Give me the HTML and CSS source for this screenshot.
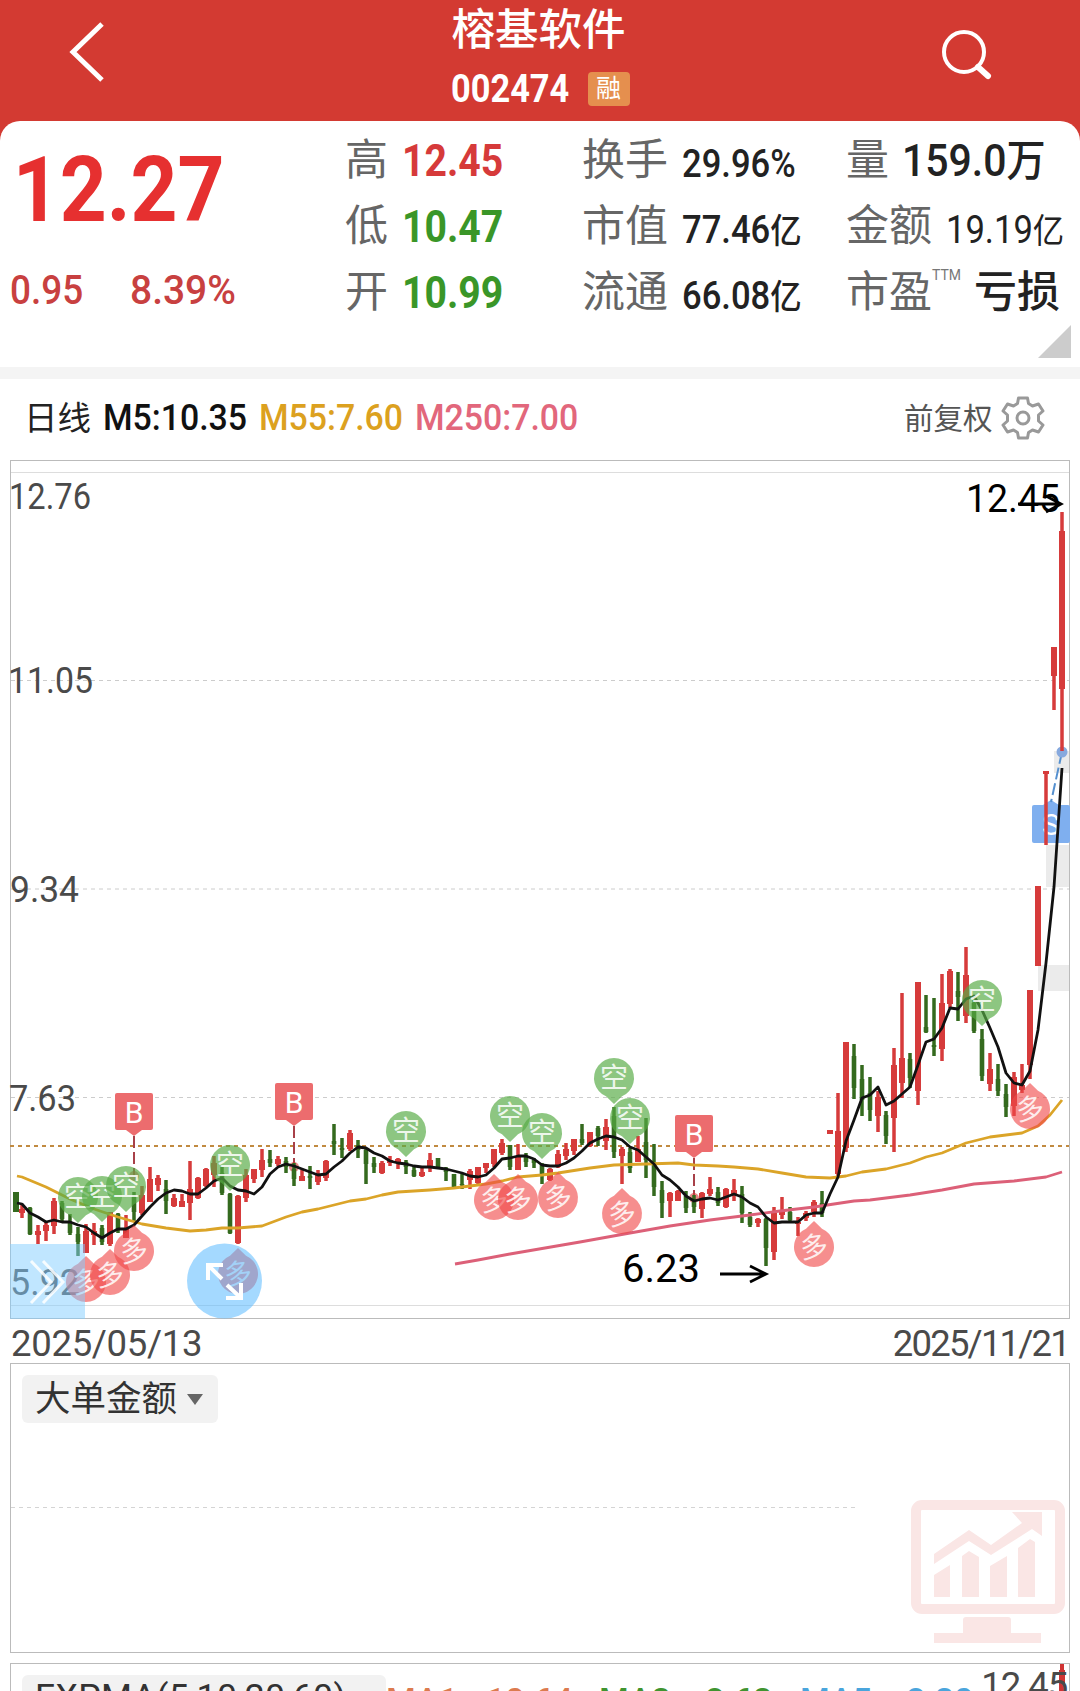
FILE: index.html
```html
<!DOCTYPE html>
<html lang="zh-CN">
<head>
    <meta charset="UTF-8">
    <meta name="viewport" content="width=device-width, initial-scale=1.0">
    <title>榕基软件 002474</title>
    <link rel="stylesheet" href="styles.css">
</head>
<body>
    <header class="header">
        <svg class="back" width="40" height="64" viewBox="0 0 40 64">
            <path d="M35 4 L6 32 L35 60" />
        </svg>
        <div class="title">
            <h1>榕基软件</h1>
            <div class="code"><span class="code-num">002474</span><span class="badge">融</span></div>
        </div>
        <svg class="search" width="54" height="54" viewBox="0 0 54 54">
            <circle cx="24" cy="24" r="20" />
            <path d="M38 39 L48 48" />
        </svg>
    </header>

    <section class="quote">
        <div class="price-box">
            <div class="price">12.27</div>
            <div class="change"><span class="diff">0.95</span><span class="pct">8.39%</span></div>
        </div>
        <div class="stats">
            <div class="cell"><span class="label">高</span><span class="value red">12.45</span></div>
            <div class="cell"><span class="label">换手</span><span class="value small">29.96%</span></div>
            <div class="cell"><span class="label">量</span><span class="value vol">159.0<i>万</i></span></div>
            <div class="cell"><span class="label">低</span><span class="value green">10.47</span></div>
            <div class="cell"><span class="label">市值</span><span class="value small">77.46<i>亿</i></span></div>
            <div class="cell"><span class="label">金额</span><span class="value small light">19.19<i>亿</i></span></div>
            <div class="cell"><span class="label">开</span><span class="value green">10.99</span></div>
            <div class="cell"><span class="label">流通</span><span class="value small">66.08<i>亿</i></span></div>
            <div class="cell"><span class="label">市盈</span><span class="ttm">TTM</span><span class="loss">亏损</span></div>
        </div>
        <div class="expand"></div>
    </section>

    <section class="legend">
        <span class="period">日线</span>
        <span class="ma ma5">M5:10.35</span>
        <span class="ma ma55">M55:7.60</span>
        <span class="ma ma250">M250:7.00</span>
        <span class="adjust">前复权</span>
        <svg class="gear" width="44" height="44" viewBox="-22 -22 44 44">
            <path d="M-4.5 -20 H4.5 L5.500 -14.500 L9.500 -12 L15.500 -14 L20 -7 L15.500 -3 V3 L20 7 L15.500 14 L9.500 12 L5.500 14.500 L4.500 20 H-4.500 L-5.500 14.500 L-9.500 12 L-15.500 14 L-20 7 L-15.500 3 V-3 L-20 -7 L-15.500 -14 L-9.500 -12 L-5.500 -14.500 Z" />
            <circle r="6" />
        </svg>
    </section>

    <svg class="kline" id="kline" width="1080" height="862" viewBox="0 459 1080 862">
        <rect class="frame" x="10.500" y="460.500" width="1059" height="858" />
        <path class="grid-solid" d="M11 472.500 H1069 M11 1305.500 H1069" />
        <path class="grid-dash" d="M11 680.500 H1069 M11 889 H1069 M11 1097.500 H1069" />
        <g class="gap">
            <rect x="1054" y="751" width="15" height="22" />
            <rect x="1046" y="845" width="23" height="42" />
            <rect x="1038" y="965" width="31" height="26" />
        </g>
        <g class="axis">
            <text x="9" y="509" textLength="82" lengthAdjust="spacingAndGlyphs">12.76</text>
            <text x="8" y="693" textLength="85" lengthAdjust="spacingAndGlyphs">11.05</text>
            <text x="10" y="902" textLength="69" lengthAdjust="spacingAndGlyphs">9.34</text>
            <text x="9" y="1111" textLength="67" lengthAdjust="spacingAndGlyphs">7.63</text>
            <text x="10" y="1295" textLength="70" lengthAdjust="spacingAndGlyphs">5.92</text>
        </g>
        <path class="cost" d="M10 1146 H1069" />
        <g id="marks"></g>
        <g id="candles"></g>
        <polyline class="line line250" points="455,1264 478,1260 510,1254 545,1248 580,1242 630,1233 670,1226 710,1220 750,1215 780,1211 814,1207 854,1201 870,1200 910,1195 942,1190 974,1184 1014,1181 1046,1177 1062,1172" />
        <polyline class="line line55" points="17,1176 22,1177 46,1187 70,1199 94,1209 118,1217 142,1224 166,1228 190,1231 206,1230 222,1228 238,1228 262,1226 270,1223 286,1217 302,1212 318,1209 334,1205 350,1201 366,1199 382,1195 398,1192 414,1191 430,1190 454,1188 470,1186 486,1184 502,1181 518,1177 542,1175 558,1173 590,1168 614,1165 646,1164 678,1163 694,1165 718,1166 734,1167 758,1169 782,1173 806,1177 830,1178 846,1176 862,1172 886,1169 910,1163 926,1157 942,1153 966,1143 990,1137 1022,1133 1038,1126 1050,1115 1062,1100" />
        <polyline class="line line5" id="line5" />
        <g id="signals"></g>
        <g class="extreme">
            <text x="966" y="512" textLength="94" lengthAdjust="spacingAndGlyphs">12.45</text>
            <path d="M1018 504 H1061 M1046 496 L1061 504 L1046 512" />
            <text x="622" y="1282" textLength="78" lengthAdjust="spacingAndGlyphs">6.23</text>
            <path d="M720 1274 H766 M750 1266 L766 1274 L750 1282" />
        </g>
        <g class="tools">
            <rect x="10" y="1244" width="75" height="75" />
            <path class="thin" d="M31 1261 L51 1282 L31 1303 M43 1261 L63 1282 L43 1303" />
            <circle cx="224.500" cy="1281" r="37.500" />
            <path d="M222 1279 L208 1265 M208 1280 V1265 H223 M227 1285 L241 1298 M241 1283 V1298 H226" />
        </g>
    </svg>

    <div class="dates"><span>2025/05/13</span><span class="to">2025/11/21</span></div>

    <section class="panel">
        <div class="tag">大单金额<i class="caret"></i></div>
        <div class="mid"></div>
        <svg class="monitor" width="156" height="148" viewBox="0 0 156 148">
            <rect class="screen" x="6" y="6" width="144" height="104" rx="6" />
            <path d="M53 121 Q53 118 56 118 H98 Q101 118 101 121 V134 H131 V144 H24 V134 H53 Z" />
            <path d="M24 55 L59 31 L81 46 L112 24 L102 13 H132 V37 L122 30 L81 56 L59 42 L24 65 Z" />
            <path d="M24 76 L40 66 V98 H24 Z M52 57 L59 52 L69 58 V98 H52 Z M80 67 L97 57 V98 H80 Z M108 49 L120 40 L125 43 V98 H108 Z" />
        </svg>
    </section>

    <section class="panel expma">
        <div class="tag"><span class="tag-text">EXPMA(5,10,20,60)</span></div>
        <span class="avg a1"><b>MA1:</b>10.64</span>
        <span class="avg a2"><b>MA2:</b>8.62</span>
        <span class="avg a3"><b>MA5:</b>8.20</span>
        <span class="bar"></span>
        <span class="top">12.45</span>
    </section>

    <script src="chart.js"></script>
</body>
</html>
```
FILE: styles.css
```css
* {
    box-sizing: border-box;
}
html,
body {
    height: 1691px;
    overflow: hidden;
}
body {
    margin: 0;
    width: 1080px;
    background: #fff;
    font-family: Roboto, "Noto Sans CJK SC", sans-serif;
    color: #222;
}
i,
b {
    font-style: normal;
    font-weight: inherit;
}

/* header */
.header {
    display: flex;
    justify-content: space-between;
    height: 141px;
    padding: 0 80px 0 67px;
    background: #d33a32;
    color: #fff;
}
.back {
    margin-top: 20px;
    fill: none;
    stroke: #fff;
    stroke-width: 5;
}
.search {
    margin-top: 28px;
    margin-right: 6px;
    fill: none;
    stroke: #fff;
    stroke-width: 4;
    stroke-linecap: round;
}
.search path {
    stroke-width: 6;
}
.title {
    width: 190px;
    margin-left: 30px;
}
.title h1 {
    margin: 0;
    font-size: 43.5px;
    font-weight: 500;
    line-height: 54px;
    white-space: nowrap;
    text-align: center;
    font-family: "Noto Sans CJK SC", sans-serif;
}
.code {
    display: flex;
    align-items: center;
    height: 69px;
    padding-left: 7px;
}
.code-num {
    width: 137px;
    font-size: 39.5px;
    font-weight: 700;
    line-height: 69px;
    transform: scaleX(.87);
    transform-origin: left;
}
.badge {
    width: 42px;
    height: 34px;
    flex: none;
    border-radius: 4px;
    background: #e58f4e;
    font-size: 25px;
    line-height: 33px;
    text-align: center;
}

/* quote */
.quote {
    position: relative;
    display: flex;
    height: 246px;
    margin-top: -20px;
    padding: 2px 0 0 10px;
    border-radius: 20px 20px 0 0;
    background: #fff;
}
.price-box {
    width: 335px;
}
.price {
    height: 134px;
    padding-left: 3px;
    font-size: 91px;
    font-weight: 700;
    line-height: 134px;
    color: #e63030;
    transform: scaleX(.9);
    transform-origin: left;
}
.change {
    display: flex;
    height: 66px;
    font-size: 41px;
    font-weight: 500;
    line-height: 67px;
    color: #c84040;
}
.change span {
    width: 120px;
    transform: scaleX(.9);
    transform-origin: left;
}
.change .pct {
    transform: scaleX(.95);
}
.stats {
    display: grid;
    grid-template-columns: 237px 264px 232px;
    grid-auto-rows: 66px;
    height: 198px;
}
.cell {
    display: flex;
    align-items: baseline;
    line-height: 66px;
    white-space: nowrap;
}
.label {
    flex: none;
    font-family: "Noto Sans CJK SC", sans-serif;
    font-size: 43px;
    color: #666;
}
.value {
    margin-left: 14px;
    font-size: 45px;
    font-weight: 700;
    transform: translateY(1px) scaleX(.87);
    transform-origin: left;
}
.value.small {
    font-size: 38px;
    font-weight: 500;
    transform: translateY(2px) scaleX(.91);
}
.value.small i {
    font-size: 34.5px;
}
.value.vol {
    margin-left: 13px;
    font-weight: 500;
    transform: translateY(1px) scaleX(.91);
}
.value.vol i {
    font-size: 43px;
}
.value.light {
    font-weight: 400;
}
.red {
    color: #d63a3a;
}
.green {
    color: #3a9628;
}
.ttm {
    align-self: flex-start;
    width: 42px;
    height: 20px;
    font-size: 14px;
    line-height: 40px;
    color: #777;
}
.loss {
    font-family: "Noto Sans CJK SC", sans-serif;
    font-size: 43px;
    font-weight: 500;
}
.expand {
    position: absolute;
    right: 9px;
    bottom: 9px;
    border-left: 33px solid transparent;
    border-bottom: 33px solid #ccc;
}

/* legend */
.legend {
    display: flex;
    align-items: center;
    height: 92px;
    border-top: 12px solid #f4f4f4;
    padding: 0 0 4px 24px;
    white-space: nowrap;
}
.period {
    width: 79px;
    margin-top: -3px;
    font-size: 33.5px;
}
.ma {
    width: 156px;
    margin-top: 1px;
    font-size: 36px;
    font-weight: 500;
    transform: scaleX(.94);
    transform-origin: left;
}
.ma5 {
    color: #111;
}
.ma55 {
    color: #dca11f;
}
.ma250 {
    width: 488px;
    color: #e2677c;
}
.adjust {
    width: 97px;
    margin-top: -2px;
    margin-left: 1px;
    font-size: 29.5px;
    color: #555;
}
.gear {
    flex: none;
    margin-top: 1px;
    fill: none;
    stroke: #999;
    stroke-width: 3;
    stroke-linejoin: round;
}

/* k line */
.kline {
    display: block;
}
.frame {
    fill: none;
    stroke: #bbb;
}
.grid-solid {
    stroke: #ddd;
}
.grid-dash {
    stroke: #ccc;
    stroke-dasharray: 4 4;
}
.gap {
    fill: #ebebeb;
}
.axis {
    fill: #4a4a4a;
    font-size: 36.5px;
}
.cost {
    stroke: #c18a40;
    stroke-width: 2;
    stroke-dasharray: 4 4;
}
.line {
    fill: none;
    stroke-width: 2.8;
    stroke-linejoin: round;
}
.line5 {
    stroke: #111;
}
.line55 {
    stroke: #dba428;
}
.line250 {
    stroke: #dc6078;
}
.up {
    fill: #d63b3b;
}
.down {
    fill: #346a1e;
}
.short,
.long {
    fill: #57ab46;
    fill-opacity: .68;
}
.long {
    fill: #f04848;
    fill-opacity: .62;
}
.sig-text {
    fill: #fff;
    fill-opacity: .85;
    font-size: 28px;
    text-anchor: middle;
}
.buy {
    fill: #ec6c6e;
}
.sell {
    fill: #7fafef;
}
.buy-dot {
    fill: #d63b3b;
    fill-opacity: .6;
}
.sell-dot {
    fill: #87a9de;
}
.stem {
    stroke: #a84048;
    stroke-width: 2;
    stroke-dasharray: 12 4;
}
.stem.blue {
    stroke: #5590cf;
}
.mark-text {
    fill: #fff;
    font-size: 30px;
    text-anchor: middle;
}
.extreme {
    fill: #000;
    font-size: 39px;
}
.extreme path {
    fill: none;
    stroke: #000;
    stroke-width: 2.8;
}
.tools rect {
    fill: #82cdff;
    fill-opacity: .5;
}
.tools circle {
    fill: #5ab9ff;
    fill-opacity: .55;
}
.tools path {
    fill: none;
    stroke: #fff;
    stroke-width: 4;
}
.tools .thin {
    stroke-width: 3;
    stroke-opacity: .85;
}

/* dates */
.dates {
    display: flex;
    justify-content: space-between;
    height: 43px;
    padding: 0 11px;
    font-size: 36.5px;
    line-height: 46px;
    letter-spacing: -.3px;
    color: #4a4a4a;
}
.dates .to {
    letter-spacing: -1.8px;
}

/* sub panels */
.panel {
    position: relative;
    display: flex;
    align-items: flex-start;
    height: 290px;
    margin: -1px 10px 0;
    padding: 11px 0 0 11px;
    border: 1px solid #bbb;
}
.tag {
    display: flex;
    align-items: center;
    width: 196px;
    height: 48px;
    padding-left: 13px;
    border-radius: 6px;
    background: #f2f2f2;
    font-size: 35.5px;
    line-height: 48px;
    color: #333;
    white-space: nowrap;
}
.caret {
    margin-left: 10px;
    border: 8.5px solid transparent;
    border-top: 11px solid #666;
    border-bottom: 0;
}
.mid {
    position: absolute;
    left: 0;
    top: 143px;
    width: 844px;
    height: 1px;
    background: repeating-linear-gradient(90deg, #d4d4d4 0 4px, transparent 4px 8px);
}
.monitor {
    position: absolute;
    right: 3px;
    bottom: 5px;
    fill: #fae6e5;
}
.monitor .screen {
    fill: none;
    stroke: #fae6e5;
    stroke-width: 10;
}
.expma {
    height: 60px;
    margin-top: 10px;
}
.expma .tag {
    width: 364px;
    line-height: 44px;
    align-items: flex-start;
}
.tag-text {
    letter-spacing: .4px;
}
.avg {
    display: flex;
    font-size: 34px;
    font-weight: 500;
    line-height: 50px;
}
.avg b {
    width: 100px;
}
.a1 {
    width: 213px;
    color: #dc7b4f;
}
.a2 {
    width: 201px;
    color: #3f9430;
}
.a3 {
    color: #4aa5dc;
}
.a2 b,
.a3 b {
    width: 106px;
}
.bar {
    position: absolute;
    right: 4px;
    top: 6px;
    width: 6px;
    height: 40px;
    background: #d03434;
}
.bar::before {
    content: "";
    position: absolute;
    left: 1px;
    top: -6px;
    width: 4px;
    height: 6px;
    background: #d03434;
}
.top {
    position: absolute;
    right: 2px;
    top: 0;
    font-size: 36.5px;
    line-height: 44px;
    letter-spacing: -1.2px;
    color: #4a4a4a;
}
```
FILE: chart.js
```js
// 方向, 最高, 实体上沿, 实体下沿, 最低
const candles = `
g 1192 1192 1212 1212|r 1205 1209 1213 1218|g 1207 1208 1234 1235|r 1225 1231 1235 1244
r 1222 1225 1231 1241|r 1198 1201 1226 1234|g 1201 1203 1219 1222|g 1214 1222 1233 1235
g 1227 1234 1242 1256|r 1224 1231 1253 1253|r 1223 1231 1235 1245|g 1225 1228 1242 1245
r 1212 1212 1244 1246|g 1213 1214 1230 1233|r 1215 1228 1238 1238|g 1192 1197 1212 1221
r 1186 1195 1213 1215|r 1167 1179 1202 1202|r 1175 1178 1185 1191|g 1180 1189 1201 1214
r 1194 1198 1206 1207|r 1194 1201 1207 1207|r 1161 1189 1203 1220|r 1177 1178 1198 1199
r 1168 1169 1186 1187|r 1156 1163 1175 1187|g 1167 1173 1193 1195|g 1193 1194 1233 1234
r 1195 1196 1243 1244|r 1169 1175 1198 1202|r 1169 1169 1179 1183|r 1149 1160 1170 1177
g 1150 1159 1163 1167|r 1156 1159 1164 1166|g 1157 1161 1167 1173|g 1163 1169 1179 1186
r 1170 1176 1181 1181|g 1166 1176 1178 1189|r 1170 1175 1182 1185|r 1160 1161 1178 1181
g 1124 1141 1144 1155|g 1138 1148 1150 1158|r 1130 1133 1149 1151|g 1140 1145 1150 1158
g 1149 1150 1164 1184|g 1157 1163 1167 1173|r 1161 1163 1173 1174|r 1156 1160 1163 1166
r 1158 1159 1162 1169|g 1160 1162 1167 1174|g 1165 1170 1176 1177|r 1167 1172 1176 1177
r 1153 1160 1168 1172|g 1158 1158 1168 1168|g 1167 1169 1172 1181|g 1174 1174 1187 1189
g 1174 1184 1185 1189|r 1169 1171 1180 1189|r 1167 1167 1183 1184|r 1163 1163 1168 1173
r 1149 1149 1164 1167|r 1139 1143 1153 1155|g 1145 1145 1167 1170|r 1144 1157 1170 1170
g 1153 1157 1162 1167|g 1158 1160 1163 1168|g 1163 1165 1175 1184|r 1168 1169 1180 1181
r 1150 1154 1167 1168|r 1143 1149 1156 1160|r 1139 1139 1151 1155|g 1124 1139 1143 1145
r 1132 1132 1146 1147|g 1126 1128 1136 1146|r 1119 1127 1141 1150|g 1107 1116 1152 1158
r 1147 1149 1156 1184|g 1148 1152 1168 1173|r 1136 1149 1162 1162|g 1118 1142 1160 1178
g 1144 1162 1187 1196|g 1181 1190 1203 1218|r 1192 1193 1201 1217|r 1190 1191 1201 1201
g 1191 1196 1208 1213|g 1195 1202 1207 1213|r 1192 1193 1209 1218|r 1177 1189 1194 1196
g 1187 1192 1203 1206|r 1188 1189 1207 1208|r 1179 1190 1194 1201|g 1186 1194 1213 1223
g 1212 1217 1225 1227|r 1218 1219 1223 1227|g 1218 1219 1248 1266|r 1207 1213 1252 1260
r 1197 1210 1215 1219|g 1207 1212 1220 1221|r 1217 1222 1224 1236|r 1211 1213 1218 1221
r 1200 1202 1212 1217|g 1191 1203 1213 1217|r 1130 1130 1134 1134|r 1093 1131 1174 1177
r 1042 1042 1148 1152|g 1044 1056 1088 1099|g 1065 1079 1100 1116|g 1077 1093 1110 1121
r 1091 1097 1116 1132|g 1111 1115 1136 1144|r 1048 1065 1118 1152|r 993 1058 1083 1098
g 1053 1059 1078 1088|r 982 982 1091 1105|g 995 1027 1032 1033|g 998 1045 1047 1056
r 974 1003 1049 1061|r 969 971 1004 1008|g 972 991 997 1021|r 947 975 1016 1023
g 1000 1003 1031 1033|g 1029 1039 1076 1081|r 1053 1069 1084 1091|g 1064 1079 1091 1096
g 1084 1094 1107 1117|r 1072 1077 1106 1116|r 1064 1085 1090 1093|r 990 990 1065 1079
r 886 886 966 966|r 771 771 774 845|r 647 647 676 710|r 512 531 689 751
`.trim().split(/[|\n]/).map(s => s.split(' '));

const ma5 = [
    1203, 1204, 1213, 1217, 1222, 1220, 1222, 1222, 1225, 1227, 1233, 1238, 1233, 1229, 1229, 1225,
    1216, 1207, 1199, 1193, 1190, 1191, 1194, 1194, 1188, 1181, 1178, 1186, 1190, 1191, 1194, 1187,
    1174, 1167, 1164, 1166, 1169, 1172, 1175, 1174, 1167, 1161, 1153, 1147, 1148, 1153, 1156, 1161,
    1163, 1164, 1166, 1167, 1167, 1168, 1169, 1171, 1173, 1176, 1177, 1175, 1168, 1159, 1158, 1156,
    1156, 1159, 1165, 1166, 1166, 1163, 1158, 1151, 1143, 1139, 1136, 1137, 1140, 1147, 1150, 1157,
    1164, 1175, 1180, 1187, 1196, 1201, 1199, 1198, 1200, 1197, 1194, 1197, 1203, 1207, 1217, 1223,
    1222, 1222, 1222, 1215, 1213, 1213, 1194, 1177, 1141, 1120, 1098, 1095, 1087, 1105, 1101, 1094,
    1087, 1065, 1042, 1039, 1028, 1008, 1009, 999, 996, 1010, 1028, 1047, 1073, 1083, 1085, 1071,
    1030, 963, 887, 768
];

const shorts = [[78, 1197], [102, 1196], [126, 1186], [230, 1165], [406, 1131], [510, 1116],
    [542, 1133], [614, 1078], [630, 1118], [982, 1000]];
const longs = [[86, 1282], [110, 1275], [134, 1251], [238, 1274], [494, 1200], [518, 1200],
    [558, 1198], [622, 1214], [814, 1247], [1030, 1109]];
// x, 标签顶部, 成交点
const buys = [[134, 1093, 1176], [294, 1083, 1167], [694, 1115, 1198]];

const xAt = i => 14 + i * 8;

document.getElementById('candles').innerHTML = candles.map(([dir, high, top, bottom, low], i) => {
    const x = i === 0 ? 16 : xAt(i);
    const cls = dir === 'r' ? 'up' : 'down';
    const body = dir === 'r' || i < 1 ? 6 : 4.6;
    return `<g class="${cls}"><rect x="${x - 1.75}" y="${high}" width="3.5" height="${low - high}"/>` +
        `<rect x="${x - body / 2}" y="${top}" width="${body}" height="${bottom - top}"/></g>`;
}).join('');

document.getElementById('line5').setAttribute('points',
    ma5.map((y, i) => `${i === 0 ? 17 : xAt(i)},${y}`).join(' '));

document.getElementById('marks').innerHTML = buys.map(([x, y, dot]) =>
    `<path class="stem" d="M${x} ${y + 43} V${dot}"/>` +
    `<circle class="buy-dot" cx="${x}" cy="${dot}" r="5"/>` +
    `<rect class="buy" x="${x - 19}" y="${y}" width="38" height="37" rx="2"/>` +
    `<path class="buy" d="M${x - 8} ${y + 37} h16 l-8 6 z"/>` +
    `<text class="mark-text" x="${x}" y="${y + 30}">B</text>`
).join('') +
    '<path class="sell" d="M1043 805 L1051 800 L1059 805 Z"/>' +
    '<rect class="sell" x="1032" y="805" width="38" height="38" rx="2"/>' +
    '<text class="mark-text" x="1051" y="835">S</text>' +
    '<path class="stem blue" d="M1062 752 L1051 802"/>' +
    '<circle class="sell-dot" cx="1062" cy="752" r="5.5"/>';

document.getElementById('signals').innerHTML = shorts.map(([x, y]) =>
    `<path class="short" d="M${x} ${y + 26} L${x - 8} ${y + 18.3} A20 20 0 1 1 ${x + 8} ${y + 18.3} Z"/>` +
    `<text class="sig-text" x="${x}" y="${y + 10}">空</text>`
).join('') + longs.map(([x, y]) =>
    `<path class="long" d="M${x} ${y - 26} L${x - 8} ${y - 18.3} A20 20 0 1 0 ${x + 8} ${y - 18.3} Z"/>` +
    `<text class="sig-text" x="${x}" y="${y + 10}" transform="rotate(-8 ${x} ${y})">多</text>`
).join('');
```
